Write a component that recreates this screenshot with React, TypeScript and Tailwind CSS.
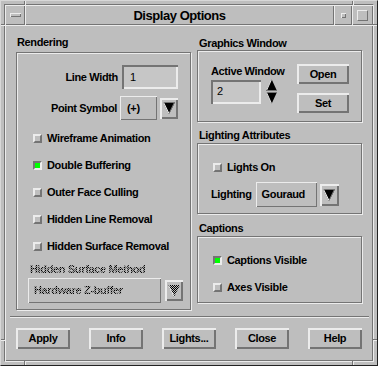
import React from "react";

const raised2 = "shadow-[inset_2px_2px_0_#ececec,inset_-2px_-2px_0_#747474]";
const raised1 = "shadow-[inset_1px_1px_0_#ececec,inset_-1px_-1px_0_#747474]";
const sunken2 = "shadow-[inset_2px_2px_0_#747474,inset_-2px_-2px_0_#ececec]";
const etched = "border border-[#747474] shadow-[inset_1px_1px_0_#ececec,1px_1px_0_#ececec]";
const stipple =
  "bg-[repeating-conic-gradient(#000_0_25%,#9a9a9a_0_50%)] bg-[length:2px_2px] bg-clip-text text-transparent";

function DownArrow({ disabled }: { disabled?: boolean }) {
  return (
    <svg width="12" height="12" viewBox="0 0 12 12">
      <defs>
        <pattern id="stip" width="2" height="2" patternUnits="userSpaceOnUse">
          <rect x="0" y="0" width="1" height="1" fill="#000" />
          <rect x="1" y="1" width="1" height="1" fill="#000" />
        </pattern>
      </defs>
      <polygon points="0,0 12,0 6,12" fill={disabled ? "url(#stip)" : "#000"} />
      {!disabled && (
        <>
          <line x1="0" y1="0.5" x2="12" y2="0.5" stroke="#747474" strokeWidth="1" />
          <line x1="0.6" y1="0.5" x2="6" y2="11.5" stroke="#ececec" strokeWidth="1" />
          <line x1="11.4" y1="0.5" x2="6" y2="11.5" stroke="#747474" strokeWidth="1" />
        </>
      )}
      {disabled && (
        <line x1="0.6" y1="0.5" x2="6" y2="11.5" stroke="#ececec" strokeWidth="1" />
      )}
    </svg>
  );
}

function ArrowBtn({ w, h, disabled }: { w: string; h: string; disabled?: boolean }) {
  return (
    <div className={`${w} ${h} ${raised2} flex items-center justify-center`}>
      <DownArrow disabled={disabled} />
    </div>
  );
}

function Check({ on, label }: { on?: boolean; label: string }) {
  return (
    <div className="h-[27px] flex items-center">
      <div
        className={
          on
            ? "w-[9px] h-[9px] border-2 border-t-[#747474] border-l-[#747474] border-r-[#ececec] border-b-[#ececec] bg-[#00ff00]"
            : "w-[9px] h-[9px] border-2 border-t-[#ececec] border-l-[#ececec] border-r-[#747474] border-b-[#747474] bg-[#bebebe]"
        }
      />
      <span className="ml-[5px]">{label}</span>
    </div>
  );
}

function Btn({ label, w, h }: { label: string; w: string; h: string }) {
  return (
    <div className={`${w} ${h} ${raised2} flex items-center justify-center`}>
      {label}
    </div>
  );
}

export default function App() {
  return (
    <div className="relative w-[378px] h-[366px] bg-[#bebebe] border border-t-[#d8d8d8] border-l-[#d8d8d8] border-r-[#222] border-b-[#222] p-[3px] text-black font-['Liberation_Sans',Arial,sans-serif] font-bold text-[11px] tracking-[-0.35px] leading-none select-none">
      <div className="h-full flex flex-col border border-t-[#747474] border-l-[#747474] border-r-[#ececec] border-b-[#ececec]">
        {/* Title bar */}
        <div className="h-[20px] flex shrink-0">
          <div className={`w-[20px] h-full ${raised1} flex items-center justify-center`}>
            <div className={`w-[11px] h-[4px] ${raised1}`} />
          </div>
          <div className={`flex-1 h-full ${raised1} flex items-center justify-center text-[13px] tracking-[-0.45px]`}>
            Display Options
          </div>
          <div className={`w-[18px] h-full ${raised1} flex items-center justify-center`}>
            <div className={`w-[5px] h-[5px] ${raised1}`} />
          </div>
          <div className={`w-[21px] h-full ${raised1} flex items-center justify-center`}>
            <div className="w-[11px] h-[11px] border border-t-[#ececec] border-l-[#ececec] border-r-[#747474] border-b-[#747474]" />
          </div>
        </div>

        {/* Client area */}
        <div className={`flex-1 flex flex-col ${raised1}`}>
          <div className="flex pt-[10px] pl-[11px] gap-[6px]">
            {/* Rendering */}
            <div className="w-[175px] flex flex-col">
              <div className="h-[14px] flex items-center pl-[1px]">Rendering</div>
              <div className={`mt-[3px] h-[258px] ${etched} flex flex-col`}>
                <div className="mt-[12px] h-[24px] flex items-center justify-end pr-[12px]">
                  <span className="mr-[4px]">Line Width</span>
                  <div className={`w-[56px] h-[24px] ${sunken2} bg-[#c6c6c6] flex items-center pl-[8px] font-normal`}>
                    1
                  </div>
                </div>
                <div className="mt-[7px] h-[24px] flex items-center justify-end pr-[12px]">
                  <span className="mr-[3px]">Point Symbol</span>
                  <div className={`w-[37px] h-[24px] ${raised1} flex items-center pl-[7px]`}>(+)</div>
                  <div className="ml-[3px]">
                    <ArrowBtn w="w-[18px]" h="h-[21px]" />
                  </div>
                </div>
                <div className="mt-[5px] pl-[16px] flex flex-col">
                  <Check label="Wireframe Animation" />
                  <Check on label="Double Buffering" />
                  <Check label="Outer Face Culling" />
                  <Check label="Hidden Line Removal" />
                  <Check label="Hidden Surface Removal" />
                </div>
                <div className="mt-[2px] h-[14px] pl-[13px] flex items-center">
                  <span className={stipple}>Hidden Surface Method</span>
                </div>
                <div className="mt-[2px] h-[25px] pl-[11px] flex items-center">
                  <div className={`w-[133px] h-[25px] ${raised1} flex items-center pl-[6px]`}>
                    <span className={stipple}>Hardware Z-buffer</span>
                  </div>
                  <div className="ml-[4px]">
                    <ArrowBtn w="w-[18px]" h="h-[21px]" disabled />
                  </div>
                </div>
              </div>
            </div>

            {/* Right column */}
            <div className="w-[165px] flex flex-col">
              <div className="mt-[1px] h-[14px] flex items-center pl-[2px]">Graphics Window</div>
              <div className={`h-[72px] ${etched} flex`}>
                <div className="pl-[13px] pt-[13px] flex flex-col">
                  <div className="h-[14px] flex items-center">Active Window</div>
                  <div className="mt-[1px] flex items-center">
                    <div className={`w-[50px] h-[24px] ${sunken2} bg-[#c6c6c6] flex items-center pl-[6px] font-normal`}>
                      2
                    </div>
                    <svg className="ml-[5px]" width="11" height="25" viewBox="0 0 11 25">
                      <polygon points="5.5,0 11,12 0,12" fill="#000" />
                      <line x1="5.5" y1="0.5" x2="0.5" y2="11.5" stroke="#ececec" />
                      <line x1="0" y1="11.5" x2="11" y2="11.5" stroke="#747474" />
                      <polygon points="0,13 11,13 5.5,25" fill="#000" />
                      <line x1="0" y1="13.5" x2="11" y2="13.5" stroke="#747474" />
                      <line x1="0.5" y1="13.5" x2="5.5" y2="24.5" stroke="#ececec" />
                    </svg>
                  </div>
                </div>
                <div className="ml-auto pr-[12px] pt-[13px] flex flex-col">
                  <Btn label="Open" w="w-[52px]" h="h-[20px]" />
                  <div className="mt-[9px]">
                    <Btn label="Set" w="w-[52px]" h="h-[20px]" />
                  </div>
                </div>
              </div>

              <div className="mt-[6px] h-[14px] flex items-center pl-[2px]">Lighting Attributes</div>
              <div className={`mt-[1px] h-[71px] ${etched} flex flex-col`}>
                <div className="mt-[13px] h-[20px] pl-[15px] flex items-center">
                  <div className="w-[9px] h-[9px] border-2 border-t-[#ececec] border-l-[#ececec] border-r-[#747474] border-b-[#747474] bg-[#bebebe]" />
                  <span className="ml-[5px]">Lights On</span>
                </div>
                <div className="mt-[5px] h-[25px] pl-[13px] flex items-center">
                  <span className="mr-[4px]">Lighting</span>
                  <div className={`w-[61px] h-[25px] ${raised1} flex items-center pl-[6px]`}>Gouraud</div>
                  <div className="ml-[3px]">
                    <ArrowBtn w="w-[19px]" h="h-[22px]" />
                  </div>
                </div>
              </div>

              <div className="mt-[7px] h-[14px] flex items-center pl-[2px]">Captions</div>
              <div className={`mt-[1px] h-[67px] ${etched} flex flex-col pt-[10px] pl-[15px]`}>
                <Check on label="Captions Visible" />
                <Check label="Axes Visible" />
              </div>
            </div>
          </div>

          {/* Separator */}
          <div className="mt-[6px] ml-[5px] mr-[4px] flex flex-col">
            <div className="h-px bg-[#747474]" />
            <div className="h-px bg-[#ececec]" />
          </div>

          {/* Buttons */}
          <div className="mt-[10px] pl-[11px] flex gap-[19px]">
            <Btn label="Apply" w="w-[54px]" h="h-[21px]" />
            <Btn label="Info" w="w-[54px]" h="h-[21px]" />
            <Btn label="Lights..." w="w-[54px]" h="h-[21px]" />
            <Btn label="Close" w="w-[54px]" h="h-[21px]" />
            <Btn label="Help" w="w-[54px]" h="h-[21px]" />
          </div>
        </div>
      </div>

      {/* Frame corner ticks */}
      <div className="absolute left-[23px] top-0 w-px h-[4px] bg-[#747474]" />
      <div className="absolute left-[24px] top-0 w-px h-[4px] bg-[#ececec]" />
      <div className="absolute left-[351px] top-0 w-px h-[4px] bg-[#747474]" />
      <div className="absolute left-[352px] top-0 w-px h-[4px] bg-[#ececec]" />
      <div className="absolute left-[23px] bottom-0 w-px h-[4px] bg-[#747474]" />
      <div className="absolute left-[24px] bottom-0 w-px h-[4px] bg-[#ececec]" />
      <div className="absolute left-[351px] bottom-0 w-px h-[4px] bg-[#747474]" />
      <div className="absolute left-[352px] bottom-0 w-px h-[4px] bg-[#ececec]" />
      <div className="absolute left-0 top-[23px] w-[4px] h-px bg-[#747474]" />
      <div className="absolute left-0 top-[24px] w-[4px] h-px bg-[#ececec]" />
      <div className="absolute right-0 top-[23px] w-[4px] h-px bg-[#747474]" />
      <div className="absolute right-0 top-[24px] w-[4px] h-px bg-[#ececec]" />
      <div className="absolute left-0 top-[338px] w-[4px] h-px bg-[#747474]" />
      <div className="absolute left-0 top-[339px] w-[4px] h-px bg-[#ececec]" />
      <div className="absolute right-0 top-[338px] w-[4px] h-px bg-[#747474]" />
      <div className="absolute right-0 top-[339px] w-[4px] h-px bg-[#ececec]" />
    </div>
  );
}
